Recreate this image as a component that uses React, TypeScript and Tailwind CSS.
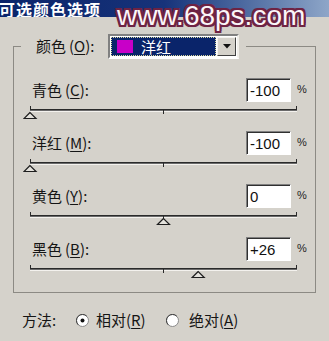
import React from "react";

const cjk = "font-['Noto_Sans_CJK_SC','Noto_Sans',sans-serif]";

function Slider({ value }: { value: number }) {
  const x0 = 7;
  const x1 = 274;
  const x = x0 + ((value + 100) / 200) * (x1 - x0);
  const mid = (x0 + x1) / 2;
  return (
    <svg width="282" height="16" className="block ml-[9px] mt-[1px]">
      <line x1={x0} y1="5.5" x2={x1} y2="5.5" stroke="#2a2a2a" strokeWidth="1" />
      <line x1={x0} y1="6.5" x2={x1} y2="6.5" stroke="#6a6a6a" strokeWidth="1" />
      <line x1={x0} y1="7.5" x2={x1} y2="7.5" stroke="#f4f2ee" strokeWidth="1" />
      <line x1={x0 + 0.5} y1="2" x2={x0 + 0.5} y2="6" stroke="#2a2a2a" strokeWidth="1" />
      <line x1={x1 - 0.5} y1="2" x2={x1 - 0.5} y2="6" stroke="#2a2a2a" strokeWidth="1" />
      <line x1={mid} y1="6" x2={mid} y2="10" stroke="#2a2a2a" strokeWidth="1" />
      <polygon
        points={`${x},8.5 ${x - 6},14.5 ${x + 6},14.5`}
        fill="#e4e2dc"
        stroke="#1e1e1e"
        strokeWidth="1.2"
      />
    </svg>
  );
}

function Row({
  name,
  letter,
  value,
  num,
}: {
  name: string;
  letter: string;
  value: string;
  num: number;
}) {
  return (
    <div className="flex flex-col h-[53px]">
      <div className="flex items-start h-[27px] pl-[18px] pr-[9px]">
        <div className={`flex-1 h-[24px] mt-[2px] flex items-center text-[15px] text-[#151515] ${cjk}`}>
          <span>{name}</span>
          <span className="ml-[3px]">
            (<span className="underline underline-offset-2">{letter}</span>):
          </span>
        </div>
        <div className="w-[45px] h-[24px] mt-[2px] bg-white border border-t-[#808080] border-l-[#808080] border-b-white border-r-white shadow-[inset_1px_1px_0_#303030] flex items-center pl-[3px] text-[15px] text-[#111] font-['Liberation_Sans',Arial,sans-serif] leading-none">
          {value}
        </div>
        <span className="ml-[6px] w-[9px] mt-[8px] text-[11px] leading-none text-[#222] font-['Liberation_Sans',Arial,sans-serif]">
          %
        </span>
      </div>
      <Slider value={num} />
    </div>
  );
}

function Radio({ checked }: { checked: boolean }) {
  return (
    <svg width="13" height="13" className="block">
      <circle cx="6.5" cy="6.5" r="6" fill="#fff" stroke="#8a8a8a" strokeWidth="1" />
      <path d="M2.2 10.8 A6 6 0 0 1 10.8 2.2" fill="none" stroke="#404040" strokeWidth="1" />
      {checked && <circle cx="6.5" cy="6.5" r="2" fill="#111" />}
    </svg>
  );
}

export default function App() {
  return (
    <div className="relative w-[329px] h-[341px] overflow-hidden bg-[#d5d2cb]">
      <div className="h-[17px] flex items-center bg-linear-to-r from-[#0a246a] via-[#17337a] to-[#8ea6c8] overflow-hidden">
        <span className={`-ml-[1px] text-[16px] font-bold text-white leading-none tracking-[1px] ${cjk}`}>
          可选颜色选项
        </span>
      </div>

      <div className="absolute left-[117px] top-[2px] text-[28px] leading-none text-[#fbf6f9] font-['Liberation_Sans',Arial,sans-serif] [text-shadow:2px_0_0_#6e2343,-2px_0_0_#6e2343,0_2px_0_#6e2343,0_-2px_0_#6e2343,2px_2px_0_#6e2343,-2px_-2px_0_#6e2343,2px_-2px_0_#6e2343,-2px_2px_0_#6e2343,0_0_3px_#8a3a5a]">
        www.68ps.com
      </div>

      <fieldset className="mx-[13px] mt-[17px] h-[259px] border border-[#8c8a84] px-0 pb-0">
        <legend className="ml-[7px] pl-[15px] pr-[7px] h-[25px] flex items-center">
          <span className={`w-[72px] text-[15px] text-[#151515] ${cjk}`}>
            颜色<span className="ml-[3px]">(<span className="underline underline-offset-2">O</span>):</span>
          </span>
          <div className="w-[131px] h-[25px] border-2 border-t-[#808080] border-l-[#808080] border-b-white border-r-[#f0eee9] bg-white flex p-[1px]">
            <div className="flex-1 bg-[#0a246a] outline outline-1 outline-dotted outline-[#d8d8a0] -outline-offset-1 flex items-center">
              <div className="ml-[6px] w-[16px] h-[13px] bg-[#c800c8]" />
              <span className={`ml-[8px] text-[15px] text-white leading-none ${cjk}`}>洋红</span>
            </div>
            <div className="w-[19px] ml-[1px] bg-[#d5d2cb] border border-t-[#f4f2ee] border-l-[#f4f2ee] border-b-[#404040] border-r-[#404040] flex items-center justify-center">
              <svg width="8" height="5">
                <polygon points="0,0 8,0 4,4.5" fill="#111" />
              </svg>
            </div>
          </div>
        </legend>
        <div className="pt-[17px]">
          <Row name="青色" letter="C" value="-100" num={-100} />
          <Row name="洋红" letter="M" value="-100" num={-100} />
          <Row name="黄色" letter="Y" value="0" num={0} />
          <Row name="黑色" letter="B" value="+26" num={26} />
        </div>
      </fieldset>

      <div className={`mt-[17px] h-[20px] flex items-center pl-[22px] text-[15px] text-[#151515] ${cjk}`}>
        <span className="w-[54px]">方法:</span>
        <Radio checked={true} />
        <span className="ml-[7px] w-[56px]">
          相对(<span className="underline underline-offset-2">R</span>)
        </span>
        <span className="ml-[14px]">
          <Radio checked={false} />
        </span>
        <span className="ml-[10px]">
          绝对(<span className="underline underline-offset-2">A</span>)
        </span>
      </div>
    </div>
  );
}
